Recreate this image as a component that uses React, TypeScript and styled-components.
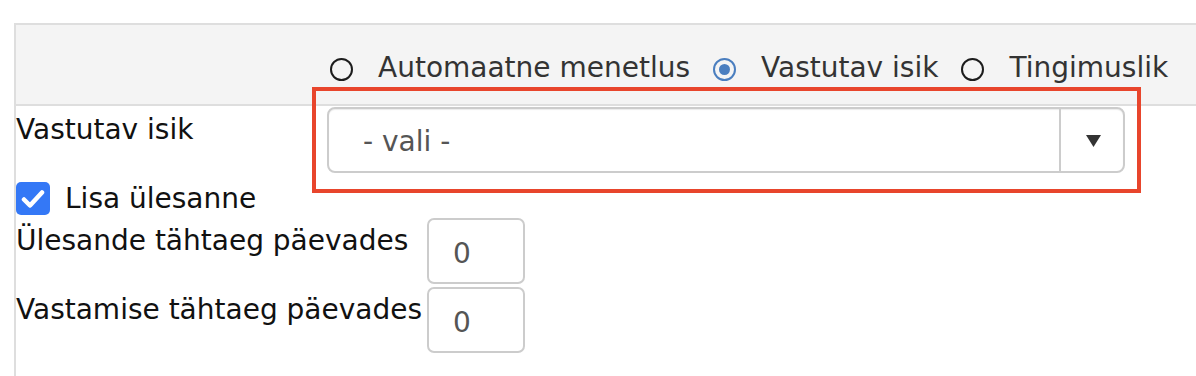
import React from 'react'
import styled, { createGlobalStyle } from 'styled-components'

const GlobalStyle = createGlobalStyle`
  html, body {
    margin: 0;
    padding: 0;
    background: #fff;
    overflow: hidden;
  }
  body {
    font-family: "DejaVu Sans", Verdana, sans-serif;
    font-size: 28px;
    color: #111;
  }
`

const Page = styled.div`
  padding: 23px 0 0 14px;
  height: 376px;
  box-sizing: border-box;
`

const Panel = styled.div`
  width: 1182px;
  height: 100%;
  border-top: 2px solid #dedede;
  border-left: 2px solid #dedede;
  box-sizing: border-box;
`

const Header = styled.div`
  height: 81px;
  box-sizing: border-box;
  padding: 26px 0 0 314px;
  background: #f4f4f4;
  border-bottom: 2px solid #dedede;
`

const RadioGroup = styled.div`
  display: flex;
  align-items: center;
  height: 34px;
  white-space: nowrap;
`

const RadioItem = styled.label`
  display: flex;
  align-items: center;
  margin-right: 23px;
  color: #333;
  line-height: 34px;
`

const RadioCircle = styled.span<{ $checked?: boolean }>`
  width: 23px;
  height: 23px;
  box-sizing: border-box;
  border-radius: 50%;
  margin: 2px 25px 0 0;
  border: ${p => (p.$checked ? '2.5px solid #4a7ebf' : '2px solid #1c1c1c')};
  display: flex;
  align-items: center;
  justify-content: center;
  flex-shrink: 0;

  &::after {
    content: '';
    display: ${p => (p.$checked ? 'block' : 'none')};
    width: 11px;
    height: 11px;
    border-radius: 50%;
    background: #4a7ebf;
  }
`

const FieldRow = styled.div`
  display: grid;
  grid-template-columns: 311px 798px;
  align-items: start;
`

const FieldLabel = styled.div`
  padding-top: 7px;
  line-height: 33px;
  color: #111;
`

const SelectWrap = styled.div`
  position: relative;
  margin-top: 1px;
`

const Highlight = styled.div`
  position: absolute;
  top: -20px;
  left: -15px;
  right: -16px;
  bottom: -20px;
  border: 4px solid #e8452c;
  pointer-events: none;
`

const SelectBox = styled.div`
  display: flex;
  height: 66px;
  box-sizing: border-box;
  border: 2px solid #cccccc;
  border-radius: 8px;
  background: #fff;
  box-shadow: inset 0 1px 1px rgba(0, 0, 0, 0.08);
`

const SelectValue = styled.div`
  flex: 1;
  display: flex;
  align-items: center;
  padding-left: 34px;
  padding-top: 3px;
  color: #555;
`

const SelectButton = styled.div`
  width: 64px;
  box-sizing: border-box;
  border-left: 2px solid #cccccc;
  display: flex;
  align-items: center;
  justify-content: center;
  padding: 2px 0 0 2px;
`

const CheckRow = styled.label`
  display: flex;
  align-items: center;
  margin-top: 9px;
  height: 33px;
  line-height: 33px;
`

const CheckBox = styled.span`
  width: 34px;
  height: 33px;
  border-radius: 5px;
  background: #3478f6;
  display: flex;
  align-items: center;
  justify-content: center;
  margin-right: 15px;
`

const NumberGrid = styled.div`
  display: grid;
  grid-template-columns: 411px 98px;
  row-gap: 3px;
  margin-top: 3px;
`

const NumberLabel = styled.div`
  padding-top: 6px;
  line-height: 33px;
  white-space: nowrap;
`

const NumberInput = styled.div`
  height: 66px;
  box-sizing: border-box;
  border: 2px solid #cccccc;
  border-radius: 7px;
  padding: 4px 0 0 24px;
  display: flex;
  align-items: center;
  color: #555;
  background: #fff;
`

const Radio = ({ label, checked }: { label: string; checked?: boolean }) => (
  <RadioItem>
    <RadioCircle $checked={checked} />
    {label}
  </RadioItem>
)

export default function App() {
  return (
    <>
      <GlobalStyle />
      <Page>
        <Panel>
          <Header>
            <RadioGroup>
              <Radio label="Automaatne menetlus" />
              <Radio label="Vastutav isik" checked />
              <Radio label="Tingimuslik" />
            </RadioGroup>
          </Header>

          <FieldRow>
            <FieldLabel>Vastutav isik</FieldLabel>
            <SelectWrap>
              <SelectBox>
                <SelectValue>- vali -</SelectValue>
                <SelectButton>
                  <svg width="15" height="12" viewBox="0 0 15 12">
                    <polygon points="0,0 15,0 7.5,12" fill="#333" />
                  </svg>
                </SelectButton>
              </SelectBox>
              <Highlight />
            </SelectWrap>
          </FieldRow>

          <CheckRow>
            <CheckBox>
              <svg width="24" height="20" viewBox="0 0 24 20">
                <path
                  d="M3 10.5 L9 16.5 L21 3.5"
                  fill="none"
                  stroke="#fff"
                  strokeWidth="4.5"
                  strokeLinecap="round"
                  strokeLinejoin="round"
                />
              </svg>
            </CheckBox>
            Lisa ülesanne
          </CheckRow>

          <NumberGrid>
            <NumberLabel>Ülesande tähtaeg päevades</NumberLabel>
            <NumberInput>0</NumberInput>
            <NumberLabel>Vastamise tähtaeg päevades</NumberLabel>
            <NumberInput>0</NumberInput>
          </NumberGrid>
        </Panel>
      </Page>
    </>
  )
}
